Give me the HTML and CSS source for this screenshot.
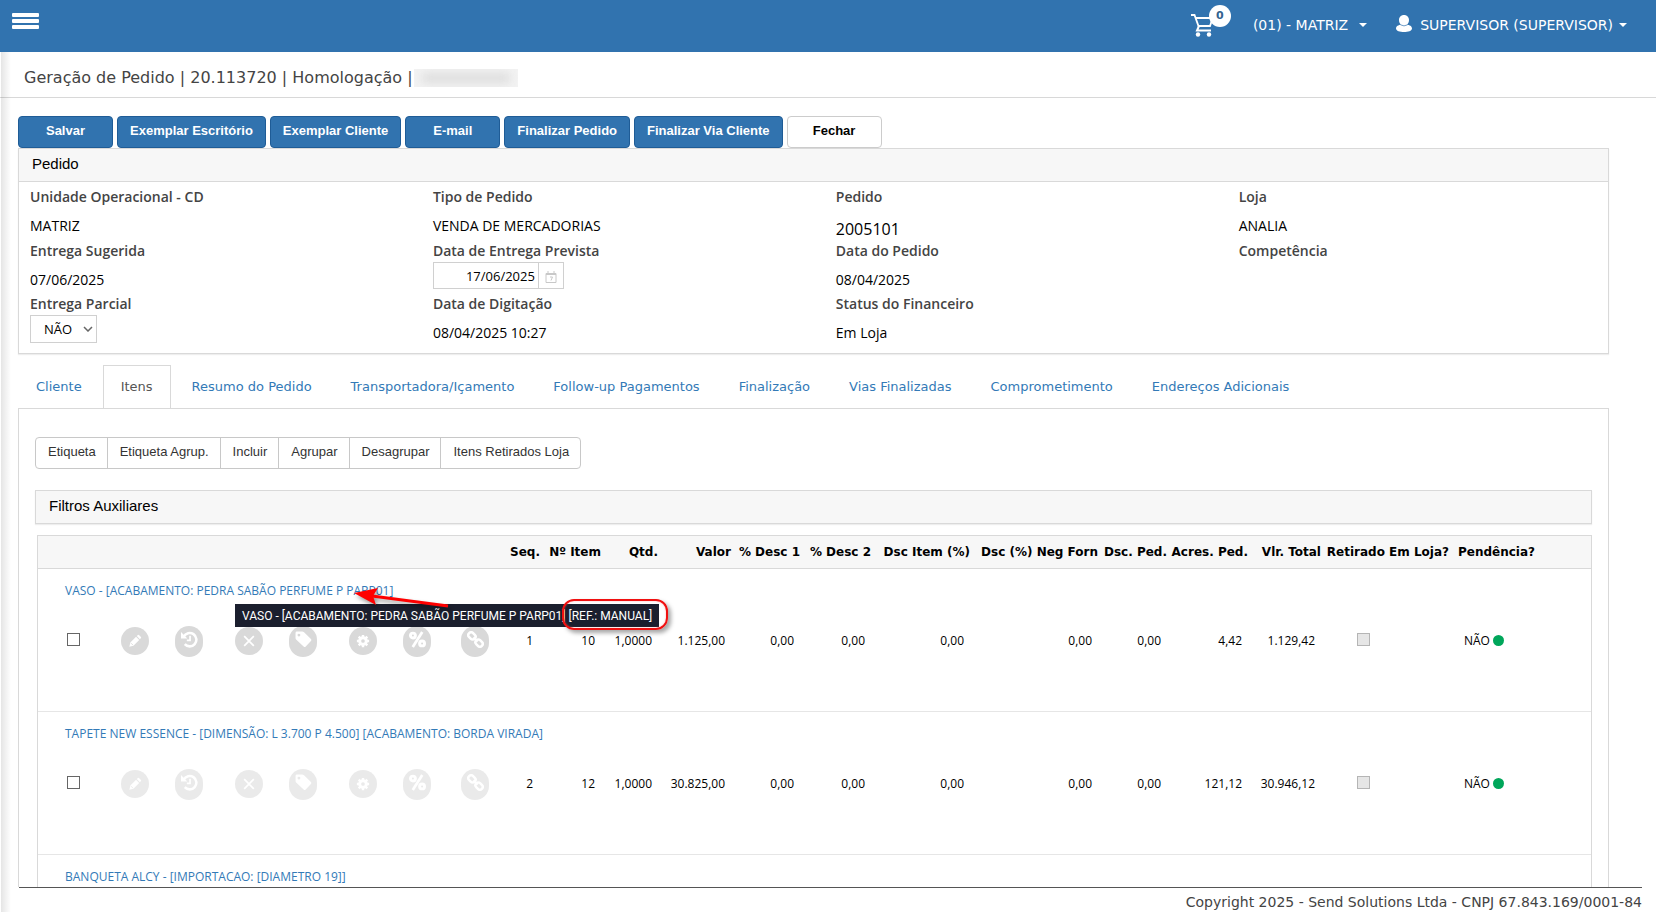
FILE: index.html
```html
<!DOCTYPE html>
<html lang="pt-BR">
<head>
<meta charset="utf-8">
<title>Geração de Pedido</title>
<link rel="stylesheet" href="styles.css">
</head>
<body>
<svg class="sprite" aria-hidden="true">
  <symbol id="pencil" viewBox="0 0 16 16"><path d="M1.500 14.500l1.200-4.700L9.200 3.200l3.600 3.600-6.600 6.500zM10 2.400l1.400-1.200q.7-.5 1.400.1l2 2q.6.700 0 1.400L13.600 6z" fill="#fff"/><path d="M3.500 10.500l2.200 2.200" stroke="#d9d9d9" stroke-width="1" fill="none"/></symbol>
  <symbol id="history" viewBox="0 0 16 16"><path d="M2.600 5.200A6.300 6.300 0 1 1 3.500 12.400" fill="none" stroke="#fff" stroke-width="2.400"/><path d="M0 1v6h6z" fill="#fff"/><path d="M8.500 4.500v4.300H5.500" fill="none" stroke="#fff" stroke-width="1.600"/></symbol>
  <symbol id="cross" viewBox="0 0 16 16"><path d="M2.500 2.500l11 11M13.500 2.500l-11 11" fill="none" stroke="#fff" stroke-width="2"/></symbol>
  <symbol id="tag" viewBox="0 0 16 16"><path fill-rule="evenodd" d="M.5 1.800Q.5.500 1.800.500h5q1 0 1.700.700l6.500 6.300q1 1 0 2l-4.900 5q-1 1-2 0L1.300 8.200Q.5 7.500.5 6.500zM3.700 2.500a1.300 1.300 0 1 0 .01 0z" fill="#fff"/></symbol>
  <symbol id="gear" viewBox="0 0 16 16"><circle cx="8" cy="8" r="3.900" fill="none" stroke="#fff" stroke-width="3.200"/><path d="M8 1v14M1 8h14M3.100 3.100l9.800 9.800M12.900 3.100l-9.800 9.800" stroke="#fff" stroke-width="2.800"/><circle cx="8" cy="8" r="2.100" fill="#d9d9d9"/></symbol>
  <symbol id="percent" viewBox="0 0 16 16"><g fill="none" stroke="#fff"><circle cx="3.700" cy="4.300" r="2.300" stroke-width="2.800"/><circle cx="12.300" cy="11.700" r="2.300" stroke-width="2.800"/><path d="M12.500 1L3.500 15" stroke-width="2.600"/></g></symbol>
  <symbol id="link" viewBox="0 0 16 16"><g fill="none" stroke="#fff" stroke-width="2.400"><rect x="-3.600" y="-2.600" width="7.200" height="5.200" rx="2.300" transform="translate(4.600 4.600) rotate(45)"/><rect x="-3.600" y="-2.600" width="7.200" height="5.200" rx="2.300" transform="translate(11.400 11.400) rotate(45)"/><path d="M6 6l4 4"/></g></symbol>
</svg>

<header class="topbar">
  <button class="menu" aria-label="Menu"><span></span><span></span><span></span></button>
  <nav class="topnav">
    <a class="cart" href="#" aria-label="Carrinho">
      <svg viewBox="0 0 24 24" width="24" height="24"><g fill="none" stroke="#fff"><path d="M0 2h3.500l4 11h11.500l3-9M5 5H23" stroke-width="1.800"/><path d="M8 13L6 17.500h14" stroke-width="2"/></g><circle cx="7" cy="21.500" r="2.200" fill="#fff"/><circle cx="18" cy="21.500" r="2.200" fill="#fff"/></svg>
      <span class="badge">0</span>
    </a>
    <a class="unit" href="#">(01) - MATRIZ<span class="caret"></span></a>
    <a class="user" href="#">
      <svg viewBox="0 0 16 17" width="16" height="17"><path d="M8 0C5 0 3 2.200 3 5c0 2 .8 3.700 2 4.700C2.500 10 0 11 0 13.500 0 16 4 17 8 17s8-1 8-3.500c0-2.500-2.500-3.500-5-3.800 1.200-1 2-2.700 2-4.700 0-2.800-2-5-5-5z" fill="#fff"/><path d="M4.500 9.800Q8 12 11.500 9.800" fill="none" stroke="#6f9dc8"/></svg>
      SUPERVISOR (SUPERVISOR)<span class="caret"></span>
    </a>
  </nav>
</header>

<div class="titlebar"><h1>Geração de Pedido | 20.113720 | Homologação |</h1><span class="redacted"><i></i></span></div>

<main class="main">
  <div class="actions">
    <button class="btn">Salvar</button>
    <button class="btn">Exemplar Escritório</button>
    <button class="btn">Exemplar Cliente</button>
    <button class="btn">E-mail</button>
    <button class="btn">Finalizar Pedido</button>
    <button class="btn">Finalizar Via Cliente</button>
    <button class="btn plain">Fechar</button>
  </div>

  <section class="panel">
    <h2 class="panel-title">Pedido</h2>
    <div class="fields">
      <div class="field tall"><b>Unidade Operacional - CD</b><span>MATRIZ</span></div>
      <div class="field tall"><b>Tipo de Pedido</b><span>VENDA DE MERCADORIAS</span></div>
      <div class="field tall"><b>Pedido</b><span class="number">2005101</span></div>
      <div class="field tall"><b>Loja</b><span>ANALIA</span></div>
      <div class="field"><b>Entrega Sugerida</b><span>07/06/2025</span></div>
      <div class="field"><label for="prevista">Data de Entrega Prevista</label>
        <div class="date"><input id="prevista" type="text" value="17/06/2025"><button aria-label="Abrir calendário"><svg viewBox="0 0 12 12" width="12" height="12"><path d="M1 2.500h10v9H1zM1 3.500h10" fill="none" stroke="#c8c8c8"/><path d="M3 0v3M9 0v3M5 6h2.500L6 9.500" fill="none" stroke="#c8c8c8"/></svg></button></div></div>
      <div class="field"><b>Data do Pedido</b><span>08/04/2025</span></div>
      <div class="field"><b>Competência</b></div>
      <div class="field"><label for="parcial">Entrega Parcial</label>
        <div class="select"><select id="parcial"><option>NÃO</option><option>SIM</option></select><svg viewBox="0 0 10 6" width="10" height="6"><path d="M1 1l4 4 4-4" fill="none" stroke="#666" stroke-width="1.500"/></svg></div></div>
      <div class="field"><b>Data de Digitação</b><span>08/04/2025 10:27</span></div>
      <div class="field"><b>Status do Financeiro</b><span>Em Loja</span></div>
    </div>
  </section>

  <nav class="tabs">
    <a href="#">Cliente</a><a href="#" class="active">Itens</a><a href="#">Resumo do Pedido</a><a href="#">Transportadora/Içamento</a><a href="#">Follow-up Pagamentos</a><a href="#">Finalização</a><a href="#">Vias Finalizadas</a><a href="#">Comprometimento</a><a href="#">Endereços Adicionais</a>
  </nav>

  <section class="tab-body">
    <div class="group">
      <button>Etiqueta</button><button>Etiqueta Agrup.</button><button>Incluir</button><button>Agrupar</button><button>Desagrupar</button><button>Itens Retirados Loja</button>
    </div>
    <h2 class="filters">Filtros Auxiliares</h2>
    <table class="items">
      <colgroup><col class="c-check"><col class="c-i1"><col class="c-i2"><col class="c-i1"><col class="c-i2"><col class="c-i1"><col class="c-i3"><col class="c-i4"><col class="c-seq"><col class="c-item"><col class="c-qty"><col class="c-val"><col class="c-d1"><col class="c-d2"><col class="c-di"><col class="c-neg"><col class="c-dp"><col class="c-ap"><col class="c-val"><col class="c-neg"><col></colgroup>
      <thead><tr><th colspan="8"></th><th>Seq.</th><th>Nº Item</th><th>Qtd.</th><th>Valor</th><th>% Desc 1</th><th>% Desc 2</th><th>Dsc Item (%)</th><th>Dsc (%) Neg Forn</th><th>Dsc. Ped.</th><th>Acres. Ped.</th><th>Vlr. Total</th><th>Retirado Em Loja?</th><th class="left">Pendência?</th></tr></thead>
      <tbody>
        <tr class="name"><td colspan="21"><a href="#">VASO - [ACABAMENTO: PEDRA SABÃO PERFUME P PARP01]</a>
          <div class="tooltip" role="tooltip">VASO - [ACABAMENTO: PEDRA SABÃO PERFUME P PARP01] [REF.: MANUAL]</div>
          <div class="mark"></div>
          <svg class="arrow" viewBox="0 0 100 26" width="100" height="26"><path d="M94 19L18 9" stroke="red" stroke-width="3"/><path d="M0 6L24 1l-5 8 3 9z" fill="red"/></svg>
        </td></tr>
        <tr class="data">
          <td class="check"><input type="checkbox" aria-label="Selecionar item 1"></td>
          <td><button class="ico" aria-label="Editar"><svg><use href="#pencil"/></svg></button></td>
          <td><button class="ico tall" aria-label="Histórico"><svg class="big"><use href="#history"/></svg></button></td>
          <td><button class="ico" aria-label="Excluir"><svg><use href="#cross"/></svg></button></td>
          <td><button class="ico tall" aria-label="Etiqueta"><svg class="big"><use href="#tag"/></svg></button></td>
          <td><button class="ico" aria-label="Configurar"><svg><use href="#gear"/></svg></button></td>
          <td><button class="ico tall" aria-label="Desconto"><svg class="big"><use href="#percent"/></svg></button></td>
          <td><button class="ico tall" aria-label="Vincular"><svg class="big"><use href="#link"/></svg></button></td>
          <td class="seq">1</td><td>10</td><td>1,0000</td><td>1.125,00</td><td>0,00</td><td>0,00</td><td>0,00</td><td>0,00</td><td>0,00</td><td>4,42</td><td>1.129,42</td>
          <td class="taken"><input type="checkbox" disabled aria-label="Retirado em loja"></td><td class="pending">NÃO <i class="dot"></i></td>
        </tr>
        <tr class="name"><td colspan="21"><a href="#">TAPETE NEW ESSENCE - [DIMENSÃO: L 3.700 P 4.500] [ACABAMENTO: BORDA VIRADA]</a></td></tr>
        <tr class="data faded">
          <td class="check"><input type="checkbox" aria-label="Selecionar item 2"></td>
          <td><button class="ico" aria-label="Editar"><svg><use href="#pencil"/></svg></button></td>
          <td><button class="ico tall" aria-label="Histórico"><svg class="big"><use href="#history"/></svg></button></td>
          <td><button class="ico" aria-label="Excluir"><svg><use href="#cross"/></svg></button></td>
          <td><button class="ico tall" aria-label="Etiqueta"><svg class="big"><use href="#tag"/></svg></button></td>
          <td><button class="ico" aria-label="Configurar"><svg><use href="#gear"/></svg></button></td>
          <td><button class="ico tall" aria-label="Desconto"><svg class="big"><use href="#percent"/></svg></button></td>
          <td><button class="ico tall" aria-label="Vincular"><svg class="big"><use href="#link"/></svg></button></td>
          <td class="seq">2</td><td>12</td><td>1,0000</td><td>30.825,00</td><td>0,00</td><td>0,00</td><td>0,00</td><td>0,00</td><td>0,00</td><td>121,12</td><td>30.946,12</td>
          <td class="taken"><input type="checkbox" disabled aria-label="Retirado em loja"></td><td class="pending">NÃO <i class="dot"></i></td>
        </tr>
        <tr class="name"><td colspan="21"><a href="#">BANQUETA ALCY - [IMPORTACAO: [DIAMETRO 19]]</a></td></tr>
      </tbody>
    </table>
  </section>
</main>

<footer class="footer">Copyright 2025 - Send Solutions Ltda - CNPJ 67.843.169/0001-84</footer>
</body>
</html>
```
FILE: styles.css
```css
* { box-sizing: border-box; }

body {
  position: relative;
  display: flex;
  flex-direction: column;
  height: 100vh;
  margin: 0;
  overflow: hidden;
  background: #fff;
  color: #000;
  font: 13px/20px "DejaVu Sans", Verdana, sans-serif;
}

/* soft edge of the collapsed side menu */
body::before {
  content: "";
  position: absolute;
  z-index: 2;
  inset: 52px auto 0 1px;
  width: 10px;
  background: linear-gradient(to right, rgba(0, 0, 0, .1), rgba(0, 0, 0, 0));
  pointer-events: none;
}

button, input, select { font: inherit; color: inherit; }
a { color: #337ab7; text-decoration: none; }
h1, h2 { margin: 0; font-weight: normal; }
.sprite { position: absolute; width: 0; height: 0; }

/* top bar */
.topbar {
  display: flex;
  flex: none;
  justify-content: space-between;
  align-items: flex-start;
  height: 52px;
  padding: 0 29px 0 12px;
  background: #3173af;
}
.menu {
  display: grid;
  gap: 2px;
  width: 27px;
  margin-top: 13px;
  padding: 0;
  border: 0;
  background: none;
}
.menu span { height: 4px; border-radius: 1px; background: #fff; }
.topnav { display: flex; align-items: center; height: 49px; font-size: 14px; }
.topnav a { display: flex; align-items: center; color: #fff; }
.cart { position: relative; width: 40px; margin-right: 22px; }
.badge {
  position: absolute;
  top: -8px;
  left: 18px;
  width: 22px;
  height: 22px;
  border-radius: 50%;
  background: #fff;
  color: #33638f;
  font: bold 11px/21px "DejaVu Sans", sans-serif;
  text-align: center;
}
.user { margin-left: 29px; gap: 6px; }
.user svg { margin: 0 2px 3px 0; }
.caret { border: 4px solid transparent; border-top-color: #fff; border-bottom: 0; }
.unit .caret { margin-left: 11px; }

.titlebar {
  display: flex;
  flex: none;
  align-items: center;
  height: 46px;
  padding: 6px 22px 0 24px;
  border-bottom: 1px solid #d8d8d8;
}
.titlebar h1 { color: #444; font-size: 16px; }
.redacted { width: 104px; height: 18px; margin-left: 1px; overflow: hidden; background: #f3f3f3; }
.redacted i { display: block; height: 10px; margin: 4px 8px; background: #ddd; filter: blur(5px); }

/* content */
.main { flex: 1; min-height: 0; overflow: hidden; padding: 18px 47px 0 18px; }
.actions { display: flex; gap: 4px; }
.btn {
  min-width: 95px;
  height: 32px;
  padding: 0 12px 2px;
  border: 1px solid #1f5c96;
  border-radius: 4px;
  background: #3173af;
  color: #fff;
  font: bold 13px/20px "Liberation Sans", Arial, sans-serif;
}
.btn.plain { border-color: #ccc; background: #fff; color: #000; }

.panel { border: 1px solid #d9d9d9; box-shadow: 0 1px 1px #eee; }
.panel-title, .filters {
  padding: 5px 13px 7px;
  background: #f7f7f7;
  font: 15px/20px "Liberation Sans", Arial, sans-serif;
}
.panel-title { border-bottom: 1px solid #d9d9d9; }
.fields {
  display: grid;
  grid-template-columns: repeat(3, 24fr) 22fr;
  padding: 5px 0 6px 11px;
  font: 14px/20px "Open Sans", "Trebuchet MS", sans-serif;
}
.field { display: flex; flex-direction: column; height: 53px; }
.field.tall { height: 54px; }
.field b, .field label { color: #444; font-weight: 600; }
.field > span { padding-top: 9px; }
.field .number { padding-top: 12px; font-size: 16px; font-weight: 500; }
.date, .select { margin-top: 1px; font-size: 13px; }
.date { display: flex; width: 131px; height: 27px; }
.date input { flex: 1; min-width: 0; padding: 0 3px; border: 1px solid #d0d0d0; background: #fff; text-align: right; }
.date button { width: 25px; padding: 4px 0 0; border: 1px solid #d0d0d0; border-left: 0; background: #fff; }
.select { position: relative; width: 67px; height: 28px; }
.select select { width: 100%; height: 100%; padding: 0 13px; border: 1px solid #d0d0d0; border-radius: 0; background: #fff; appearance: none; }
.select svg { position: absolute; right: 4px; top: 11px; pointer-events: none; }

.tabs { display: flex; gap: 3px; margin-top: 11px; }
.tabs a { height: 43px; padding: 11px 17px; border: 1px solid transparent; border-bottom: 0; }
.tabs .active { z-index: 1; margin-bottom: -1px; border-color: #d9d9d9; background: #fff; color: #555; }
.tab-body { height: 600px; padding: 28px 16px 0; border: 1px solid #d9d9d9; }

.group { display: flex; width: fit-content; height: 32px; border: 1px solid #c8c8c8; border-radius: 4px; }
.group button {
  padding: 0 11px 2px 12px;
  border: 0;
  border-right: 1px solid #c8c8c8;
  background: none;
  color: #333;
  font: 13px/20px "Liberation Sans", Arial, sans-serif;
}
.group button:last-child { border: 0; }
.filters { margin-top: 21px; border: 1px solid #d9d9d9; box-shadow: 0 1px 1px #eee; }

/* item table */
.items {
  width: calc(100% - 2px);
  margin: 11px 0 0 2px;
  border: 1px solid #d9d9d9;
  border-spacing: 0;
  table-layout: fixed;
  font: 12px/18px "Open Sans", "Trebuchet MS", sans-serif;
}
.c-check { width: 83px; }
.c-i1 { width: 54px; }
.c-i2 { width: 60px; }
.c-i3 { width: 58px; }
.c-i4 { width: 47px; }
.c-seq { width: 36px; }
.c-item { width: 61px; }
.c-qty { width: 57px; }
.c-val { width: 73px; }
.c-d1 { width: 69px; }
.c-d2 { width: 71px; }
.c-di { width: 99px; }
.c-neg { width: 128px; }
.c-dp { width: 69px; }
.c-ap { width: 81px; }
.items th {
  height: 33px;
  padding: 0 4px 0 0;
  border-bottom: 1px solid #d9d9d9;
  background: #f7f7f7;
  font: bold 12px/20px "DejaVu Sans", Verdana, sans-serif;
  text-align: right;
  white-space: nowrap;
}
.items th.left { padding: 0 0 0 5px; text-align: left; }
.name td { position: relative; height: 45px; padding: 0 27px 2px; }
.data td { height: 98px; padding: 0 10px 43px 0; border-bottom: 1px solid #e6e6e6; text-align: right; }
.data td:nth-child(-n+8) { padding-right: 0; text-align: left; }
.data .check { padding-left: 29px; }
.data .seq { padding-right: 11px; }
.data .taken { padding-left: 32px; text-align: left; }
.data .pending { padding-left: 11px; text-align: left; }
.data input {
  display: block;
  width: 13px;
  height: 13px;
  margin: 0 0 3px;
  border: 1px solid #666;
  background: #fff;
  appearance: none;
}
.data input:disabled { border-color: #b5b5b5; background: #e6e6e6; }
.dot { display: inline-block; width: 11px; height: 11px; border-radius: 50%; background: #00a65a; vertical-align: -1px; }
.ico {
  display: grid;
  place-items: center;
  width: 28px;
  height: 28px;
  padding: 0;
  border: 0;
  border-radius: 14px;
  background: #d9d9d9;
}
.ico.tall { height: 31px; padding-bottom: 3px; }
.ico svg { width: 14px; height: 14px; }
.ico .big { width: 17px; height: 17px; }
.faded .ico { opacity: .55; }

.tooltip {
  position: absolute;
  z-index: 1;
  top: 35px;
  left: 197px;
  padding: 3px 7px 2px;
  background: #1b1f2e;
  color: #fff;
  font-family: Roboto, "Trebuchet MS", sans-serif;
  white-space: nowrap;
}
.mark {
  position: absolute;
  z-index: 2;
  top: 30px;
  left: 524px;
  width: 106px;
  height: 31px;
  border: 2px solid #f01010;
  border-radius: 12px;
  box-shadow: 3px 3px 4px rgba(0, 0, 0, .35), inset 0 0 2px rgba(255, 120, 120, .6);
}
.arrow {
  position: absolute;
  z-index: 2;
  top: 18px;
  left: 316px;
  filter: drop-shadow(2px 3px 2px rgba(0, 0, 0, .4));
}

.footer {
  flex: none;
  height: 25px;
  margin: 0 14px 0 19px;
  padding-top: 4px;
  border-top: 1px solid #555;
  color: #444;
  font-size: 14px;
  text-align: right;
}
```
